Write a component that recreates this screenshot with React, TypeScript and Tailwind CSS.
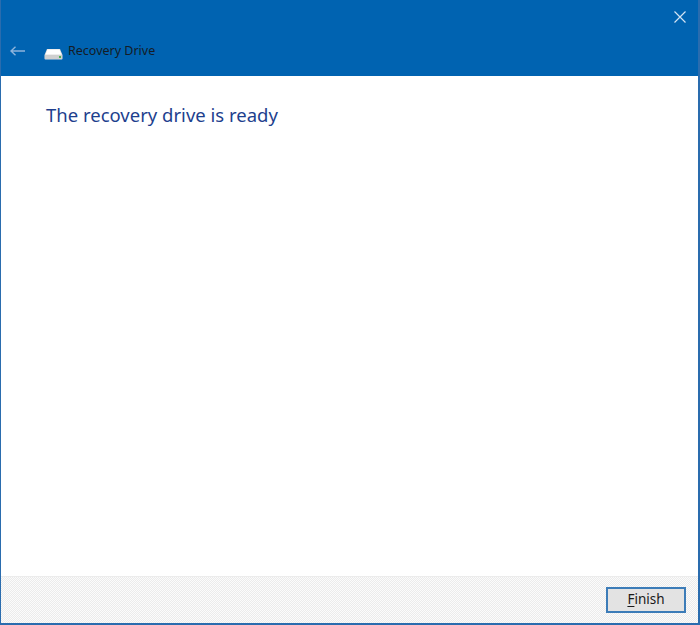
import React from "react";

export default function App() {
  return (
    <div className="w-[700px] h-[625px] flex flex-col border-l border-r-2 border-b-2 border-[#2a6cae] bg-white overflow-hidden" style={{ fontFamily: '"Noto Sans", "Open Sans", sans-serif' }}>
      <div className="h-[76px] shrink-0 bg-[#0063b1] flex flex-col">
        <div className="flex justify-end h-[34px] pr-[12px] pt-[11px]">
          <svg width="12" height="12" viewBox="0 0 12 12">
            <path d="M0.5 0.5 L11.5 11.5 M11.5 0.5 L0.5 11.5" stroke="#d2e3f3" strokeWidth="1.2" />
          </svg>
        </div>
        <div className="flex items-center h-[36px] pl-[9px] pb-[2px]">
          <svg width="16" height="10" viewBox="0 0 16 10" className="mr-[18px]">
            <path d="M1 5 H15 M5.5 0.8 L1 5 L5.5 9.2" stroke="#8db4dc" strokeWidth="1.4" fill="none" />
          </svg>
          <svg width="19" height="12" viewBox="0 0 19 12" className="mr-[5px] mt-[5px]">
            <path d="M3 1 H16 L18.5 7 V10.5 Q18.5 11.5 17.5 11.5 H1.5 Q0.5 11.5 0.5 10.5 V7 Z" fill="#dcdcdc" />
            <path d="M3.5 1.5 H15.5 L17.5 6.5 H1.5 Z" fill="#ffffff" />
            <rect x="1" y="7" width="17" height="4" fill="#cfcfcf" />
            <rect x="15" y="8" width="2" height="2" fill="#4caf50" />
          </svg>
          <span className="text-[12.5px] text-[#141c26] leading-none">Recovery Drive</span>
        </div>
      </div>
      <div className="flex-1 bg-white pl-[45px] pt-[26px]">
        <h1 className="text-[18.5px] text-[#1e3f8e] leading-[26px] font-normal">The recovery drive is ready</h1>
      </div>
      <div className="h-[47px] shrink-0 border-t border-[#ececec] bg-[repeating-conic-gradient(#ebebeb_0_25%,#fbfbfb_0_50%)] bg-[length:2px_2px] flex items-start justify-end pr-[12px] pt-[10px]">
        <button className="w-[80px] h-[26px] border-2 border-[#3c7cb8] bg-[#e3e3e3] text-[13.5px] text-[#1a1a1a] leading-none flex items-center justify-center">
          <span><span className="underline underline-offset-2">F</span>inish</span>
        </button>
      </div>
    </div>
  );
}
